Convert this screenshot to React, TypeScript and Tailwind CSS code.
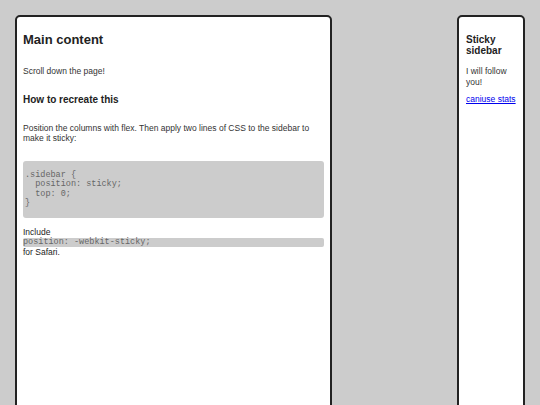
import React from "react";

export default function App() {
  const font = { fontFamily: '"Liberation Sans", Arial, sans-serif' };
  const mono = { fontFamily: '"Liberation Mono", "Courier New", monospace' };
  return (
    <div
      className="h-[405px] w-[540px] overflow-hidden bg-[#cccccc] flex justify-between items-start px-[15px] pt-[15px] text-[#222]"
      style={font}
    >
      <div className="w-[317px] h-[600px] shrink-0 bg-white border-2 border-[#222] rounded-[5px] px-[6px]">
        <h1 className="text-[13px] leading-[15px] font-bold mt-[15px]">Main content</h1>
        <p className="text-[8.5px] leading-[10px] mt-[19px] text-[#333]">Scroll down the page!</p>
        <h3 className="text-[10px] leading-[12px] font-bold mt-[18px]">How to recreate this</h3>
        <p className="text-[8.5px] leading-[10px] mt-[17px] text-[#333]">
          Position the columns with flex. Then apply two lines of CSS to the sidebar to make it sticky:
        </p>
        <pre
          className="mt-[18px] bg-[#cccccc] rounded-[3px] px-[2px] text-[8.5px] leading-[9.5px] text-[#666] whitespace-pre"
          style={mono}
        >
          {"\n.sidebar {\n  position: sticky;\n  top: 0;\n}\n\n"}
        </pre>
        <div className="text-[8.5px] leading-[10px] mt-[9px]">
          <div>Include</div>
          <code
            className="block bg-[#cccccc] rounded-[2px] text-[8.5px] leading-[9px] my-[0.5px] text-[#666]"
            style={mono}
          >
            position: -webkit-sticky;
          </code>
          <div>for Safari.</div>
        </div>
      </div>
      <div className="w-[68px] h-[600px] shrink-0 bg-white border-2 border-[#222] rounded-[5px] pl-[7px] pr-[5px]">
        <h3 className="text-[10px] leading-[11px] font-bold mt-[17px]">Sticky sidebar</h3>
        <p className="text-[8.5px] leading-[11px] mt-[10px] text-[#333]">I will follow you!</p>
        <p className="text-[8.5px] leading-[11px] mt-[6px]">
          <a href="#" className="text-[#0000ee] underline">
            caniuse stats
          </a>
        </p>
      </div>
    </div>
  );
}
